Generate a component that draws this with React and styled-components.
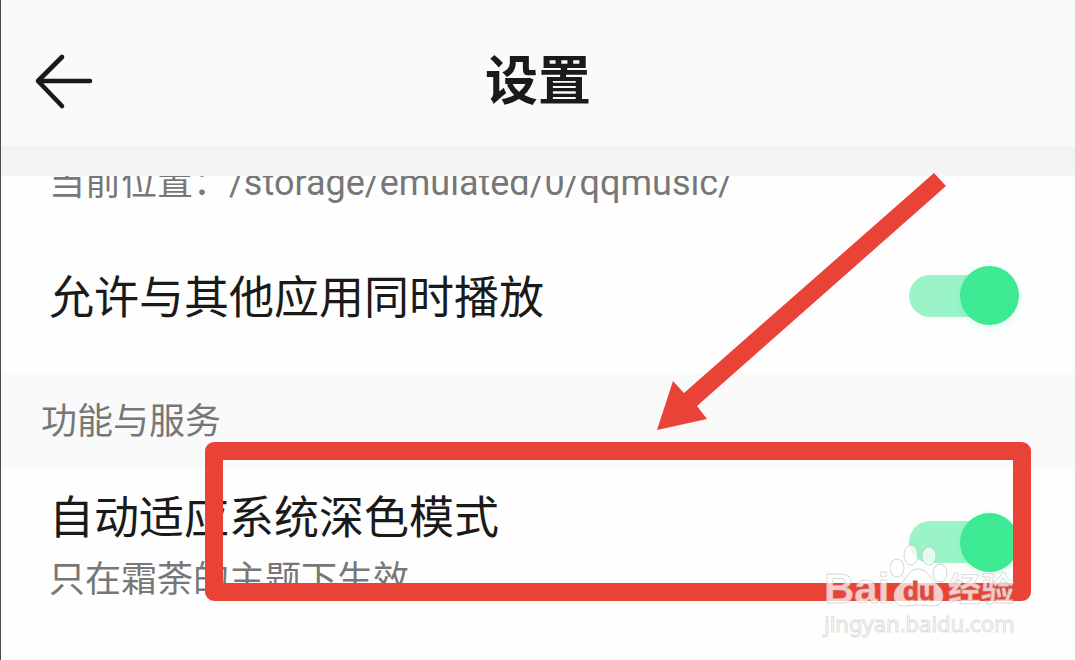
import React from "react";
import styled, { createGlobalStyle } from "styled-components";

const GlobalStyle = createGlobalStyle`
  * { box-sizing: border-box; }
  body {
    margin: 0;
    background: #fefefe;
    color: #1a1a1a;
    font-family: "Noto Sans CJK SC", sans-serif;
  }
`;

const Screen = styled.div`
  position: relative;
  min-height: 100vh;
  overflow: hidden;
  border-left: 1px solid #4c4c4c;
`;

const Header = styled.header`
  display: grid;
  grid-template-columns: 1fr auto 1fr;
  align-items: center;
  height: 146px;
  padding: 16px 32px 0;
  background: #fafafa;
`;

const BackButton = styled.button`
  display: flex;
  width: 64px;
  padding: 0;
  border: 0;
  background: none;
`;

const Title = styled.h1`
  margin: 0;
  padding-bottom: 8px;
  font-size: 53px;
  line-height: 64px;
  font-weight: 700;
`;

const HeaderEdge = styled.div`
  height: 30px;
  background: linear-gradient(#f2f2f2, #f5f5f5);
`;

const LocationLine = styled.div`
  display: flex;
  align-items: flex-end;
  height: 28px;
  padding: 0 48px;
  overflow: hidden;
  white-space: nowrap;
  font-size: 36px;
  line-height: 52px;
  color: #777;
`;

const LocationText = styled.span`
  flex: none;
  height: 51px;
`;

const Path = styled.span`
  font-family: Roboto, sans-serif;
`;

const SettingRow = styled.label`
  display: flex;
  align-items: center;
  justify-content: space-between;
  padding: 0 56px 0 48px;
`;

const PlaybackRow = styled(SettingRow)`
  height: 169px;
  padding-top: 14px;
`;

const ThemeRow = styled(SettingRow)`
  padding-top: 20px;
`;

const RowText = styled.span`
  display: flex;
  flex-direction: column;
  gap: 12px;
`;

const RowTitle = styled.span`
  padding-bottom: 3px;
  font-size: 45px;
  line-height: 53px;
`;

const RowHint = styled.span`
  font-size: 36px;
  line-height: 40px;
  color: #777;
`;

const SectionTitle = styled.h2`
  display: flex;
  align-items: center;
  height: 95px;
  margin: 0;
  padding: 0 40px 6px;
  background: #fafafa;
  font-size: 36px;
  line-height: 40px;
  font-weight: 400;
  color: #777;
`;

const Switch = styled.input`
  appearance: none;
  display: grid;
  align-items: center;
  flex: none;
  width: 110px;
  height: 60px;
  margin: 0;

  &::before, &::after {
    content: "";
    grid-area: 1 / 1;
  }
  &::before {
    width: 96px;
    height: 42px;
    border-radius: 21px;
    background: #9af4c7;
  }
  &::after {
    justify-self: end;
    width: 59px;
    height: 59px;
    border-radius: 50%;
    background: #3ee993;
    box-shadow: 0 2px 8px #3ee99333;
  }
`;

const Highlighted = styled.div`
  position: relative;
`;

const HighlightFrame = styled.div`
  position: absolute;
  top: -26px;
  left: 204px;
  right: 44px;
  height: 159px;
  border: 18px solid #e94337;
  border-radius: 9px;
`;

const Arrow = styled.svg`
  position: absolute;
  right: 128px;
  top: -295px;
`;

const Watermark = styled.div`
  position: absolute;
  top: 74px;
  right: 57px;
  width: 194px;
  color: #ffffffb8;
  -webkit-text-stroke: 1px #bbbbbb80;
`;

const Brand = styled.div`
  display: flex;
  align-items: flex-end;
  height: 66px;
  white-space: nowrap;
`;

const Latin = styled.span`
  width: 66px;
  font: 700 42px/38px "Liberation Sans", sans-serif;
`;

const Paw = styled.span`
  display: grid;
  flex: none;
  width: 58px;
  height: 66px;

  svg, span { grid-area: 1 / 1; }
`;

const PawText = styled.span`
  place-self: end center;
  color: #e5483c;
  -webkit-text-stroke: 1px #d35a50;
  font: 700 26px/34px "Liberation Sans", sans-serif;
`;

const Chinese = styled.span`
  font-size: 33px;
  line-height: 42px;
  font-weight: 700;
`;

const Site = styled.div`
  padding-top: 2px;
  font: 400 22px/26px "Noto Sans", sans-serif;
`;

export default function App() {
  return (
    <>
      <GlobalStyle />
      <Screen>
        <Header>
          <BackButton aria-label="返回">
            <svg width="64" height="60" fill="none" stroke="#1a1a1a" strokeWidth="4.6" strokeLinecap="round" strokeLinejoin="round">
              <path d="M29 6 5 30l24 25M5 30h52" />
            </svg>
          </BackButton>
          <Title>设置</Title>
        </Header>
        <HeaderEdge />
        <main>
          <LocationLine>
            <LocationText>
              当前位置：<Path>/storage/emulated/0/qqmusic/</Path>
            </LocationText>
          </LocationLine>
          <PlaybackRow>
            <RowTitle>允许与其他应用同时播放</RowTitle>
            <Switch type="checkbox" role="switch" defaultChecked />
          </PlaybackRow>
          <SectionTitle>功能与服务</SectionTitle>
          <Highlighted>
            <ThemeRow>
              <RowText>
                <RowTitle>自动适应系统深色模式</RowTitle>
                <RowHint>只在霜荼的主题下生效</RowHint>
              </RowText>
              <Switch type="checkbox" role="switch" defaultChecked />
            </ThemeRow>
            <HighlightFrame />
            <Arrow width="290" height="257" viewBox="657 173 290 257">
              <path d="M657 430 673 381 684 393 934 173 946 186 697 406 707 419Z" fill="#e94337" />
            </Arrow>
            <Watermark>
              <Brand>
                <Latin>Bai</Latin>
                <Paw>
                  <svg width="58" height="66" fill="#ffffffb8" stroke="#bbbbbba0">
                    <ellipse cx="7" cy="26" rx="7" ry="9" />
                    <ellipse cx="21" cy="13" rx="7" ry="10" />
                    <ellipse cx="39" cy="14" rx="7" ry="9" />
                    <ellipse cx="50" cy="31" rx="7" ry="9" />
                    <path d="M28 27c7 0 10 5 14 10 5 6 11 9 11 17 0 6-4 10-10 10-5 0-9-1-15-1s-9 1-14 1C8 64 4 60 4 54c0-8 6-11 11-17 4-5 6-10 13-10Z" />
                  </svg>
                  <PawText>du</PawText>
                </Paw>
                <Chinese>经验</Chinese>
              </Brand>
              <Site>jingyan.baidu.com</Site>
            </Watermark>
          </Highlighted>
        </main>
      </Screen>
    </>
  );
}
